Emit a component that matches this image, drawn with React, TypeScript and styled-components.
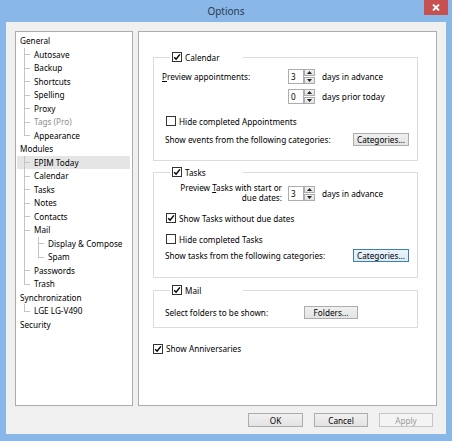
import React from "react";
import styled, { createGlobalStyle } from "styled-components";

const GlobalStyle = createGlobalStyle`
  html, body { margin: 0; padding: 0; }
  body {
    width: 452px;
    height: 441px;
    overflow: hidden;
    font-family: "Noto Sans", "Liberation Sans", sans-serif;
    font-size: 8.2px;
    color: #000;
  }
`;

type TreeItem = { label: string; level: number; last?: boolean; through?: number[]; disabled?: boolean; selected?: boolean };

// through = ancestor levels whose guide line keeps running past this row
const treeItems: TreeItem[] = [
  { label: "General", level: 0 },
  { label: "Autosave", level: 1 },
  { label: "Backup", level: 1 },
  { label: "Shortcuts", level: 1 },
  { label: "Spelling", level: 1 },
  { label: "Proxy", level: 1 },
  { label: "Tags (Pro)", level: 1, disabled: true },
  { label: "Appearance", level: 1, last: true },
  { label: "Modules", level: 0 },
  { label: "EPIM Today", level: 1, selected: true },
  { label: "Calendar", level: 1 },
  { label: "Tasks", level: 1 },
  { label: "Notes", level: 1 },
  { label: "Contacts", level: 1 },
  { label: "Mail", level: 1 },
  { label: "Display & Compose", level: 2, through: [1] },
  { label: "Spam", level: 2, last: true, through: [1] },
  { label: "Passwords", level: 1 },
  { label: "Trash", level: 1, last: true },
  { label: "Synchronization", level: 0 },
  { label: "LGE LG-V490", level: 1, last: true },
  { label: "Security", level: 0 },
];

const Frame = styled.div`
  width: 452px;
  height: 441px;
  box-sizing: border-box;
  background: #88b7e8;
  padding: 0 6px 7px 6px;
  display: flex;
  flex-direction: column;
`;

const TitleBar = styled.div`
  position: relative;
  height: 22px;
  display: flex;
  align-items: center;
  justify-content: center;
  font-size: 10px;
  color: #2c3a4e;
`;

const CloseButton = styled.div`
  position: absolute;
  top: 0;
  right: -2px;
  width: 24px;
  height: 15px;
  background: #c75050;
  display: flex;
  align-items: center;
  justify-content: center;
`;

const Client = styled.div`
  flex: 1;
  background: #f0f0f0;
  display: flex;
  flex-direction: column;
  padding: 9px 9px 0 9px;
`;

const Body = styled.div`
  display: flex;
  gap: 5px;
  height: 375px;
`;

const Tree = styled.div`
  width: 118px;
  box-sizing: border-box;
  background: #fff;
  border: 1px solid #adadad;
  padding: 2px 2px 0 1px;
`;

const Row = styled.div<{ $level: number; $selected?: boolean; $disabled?: boolean }>`
  position: relative;
  height: 13.5px;
  line-height: 13.5px;
  padding-left: ${(p) => 3 + p.$level * 14}px;
  background: ${(p) => (p.$selected ? "#e5e5e5" : "transparent")};
  color: ${(p) => (p.$disabled ? "#8d8d8d" : "#000")};
  white-space: nowrap;
`;

const Guide = styled.span<{ $x: number; $half?: boolean }>`
  position: absolute;
  left: ${(p) => p.$x}px;
  top: 0;
  height: ${(p) => (p.$half ? "50%" : "100%")};
  border-left: 1px solid #c4c4c4;
`;

const Stub = styled.span<{ $x: number }>`
  position: absolute;
  left: ${(p) => p.$x}px;
  top: 50%;
  width: 6px;
  border-top: 1px solid #c4c4c4;
`;

const Panel = styled.div`
  flex: 1;
  box-sizing: border-box;
  background: #fff;
  border: 1px solid #adadad;
  padding: 18.5px 18px 0 14px;
`;

const Group = styled.fieldset<{ $pt: number; $pb: number; $mt?: number }>`
  margin: ${(p) => p.$mt ?? 0}px 0 0 0;
  border: 1px solid #dcdcdc;
  padding: ${(p) => p.$pt}px 8px ${(p) => p.$pb}px 8px;
  min-width: 0;
`;

const Legend = styled.legend`
  margin-left: 8px;
  width: 73px;
  box-sizing: border-box;
  padding: 0 2px;
  height: 13px;
  display: flex;
  align-items: center;
  gap: 3px;
`;

const SpinGrid = styled.div<{ $rowH: number }>`
  display: grid;
  grid-template-columns: 120px 27px auto;
  grid-auto-rows: ${(p) => p.$rowH}px;
  column-gap: 6px;
  row-gap: 5px;
  align-items: center;
`;

const SpinLabel = styled.div<{ $right?: boolean }>`
  text-align: ${(p) => (p.$right ? "right" : "left")};
  line-height: 10px;
`;

const SpinAfter = styled.div`
  margin-left: 1px;
`;

const SpinBox = styled.div`
  display: flex;
  height: 15px;
`;

const SpinInput = styled.div`
  width: 16px;
  box-sizing: border-box;
  border: 1px solid #abadb3;
  background: #fff;
  padding-left: 2px;
  line-height: 13px;
`;

const SpinButtons = styled.div`
  width: 11px;
  display: flex;
  flex-direction: column;
  gap: 1px;
`;

const SpinButton = styled.div`
  flex: 1;
  box-sizing: border-box;
  border: 1px solid #acacac;
  background: linear-gradient(#f2f2f2, #e2e2e2);
  display: flex;
  align-items: center;
  justify-content: center;
`;

const CheckRow = styled.div<{ $mt: number; $indent: number }>`
  margin-top: ${(p) => p.$mt}px;
  padding-left: ${(p) => p.$indent}px;
  height: 13px;
  display: flex;
  align-items: center;
  gap: 3px;
`;

const Box = styled.span`
  width: 10px;
  height: 10px;
  box-sizing: border-box;
  border: 1px solid #333;
  background: #fff;
  display: inline-flex;
  align-items: center;
  justify-content: center;
  flex-shrink: 0;
`;

const ButtonRow = styled.div<{ $mt: number; $textW?: number }>`
  margin-top: ${(p) => p.$mt}px;
  padding-left: 3px;
  height: 13px;
  display: flex;
  align-items: center;
  & > span {
    ${(p) => (p.$textW ? `width: ${p.$textW}px;` : "flex: 1;")}
  }
`;

const Button = styled.div<{ $w: number; $h?: number; $focus?: boolean; $disabled?: boolean }>`
  width: ${(p) => p.$w}px;
  height: ${(p) => p.$h ?? 13}px;
  box-sizing: border-box;
  border: 1px solid ${(p) => (p.$focus ? "#3c7fb1" : p.$disabled ? "#c6c6c6" : "#acacac")};
  background: ${(p) =>
    p.$focus
      ? "linear-gradient(#eaf3fb, #dcebf8)"
      : p.$disabled
      ? "#f4f4f4"
      : "linear-gradient(#f0f0f0, #e3e3e3)"};
  color: ${(p) => (p.$disabled ? "#9a9a9a" : "#000")};
  display: flex;
  align-items: center;
  justify-content: center;
  flex-shrink: 0;
`;

const Footer = styled.div`
  display: flex;
  justify-content: flex-end;
  gap: 11px;
  padding: 7px 4px 7px 0;
`;

const Check = ({ on }: { on: boolean }) => (
  <Box>
    {on && (
      <svg width="8" height="8" viewBox="0 0 8 8">
        <path d="M1.2 4.2 L3.1 6.2 L6.9 1.4" fill="none" stroke="#000" strokeWidth="1.5" />
      </svg>
    )}
  </Box>
);

const Spin = ({ value }: { value: string }) => (
  <SpinBox>
    <SpinInput>{value}</SpinInput>
    <SpinButtons>
      <SpinButton>
        <svg width="5" height="3" viewBox="0 0 5 3"><path d="M0 3 L2.5 0 L5 3 Z" fill="#222" /></svg>
      </SpinButton>
      <SpinButton>
        <svg width="5" height="3" viewBox="0 0 5 3"><path d="M0 0 L2.5 3 L5 0 Z" fill="#222" /></svg>
      </SpinButton>
    </SpinButtons>
  </SpinBox>
);

export default function App() {
  return (
    <>
      <GlobalStyle />
      <Frame>
        <TitleBar>
          Options
          <CloseButton>
            <svg width="8" height="7" viewBox="0 0 8 7">
              <path d="M1 0.5 L7 6.5 M7 0.5 L1 6.5" stroke="#fff" strokeWidth="1.8" />
            </svg>
          </CloseButton>
        </TitleBar>
        <Client>
          <Body>
            <Tree>
              {treeItems.map((it, i) => (
                <Row key={i} $level={it.level} $selected={it.selected} $disabled={it.disabled}>
                  {(it.through || []).map((l) => (
                    <Guide key={"t" + l} $x={7 + (l - 1) * 14} />
                  ))}
                  {it.level > 0 && (
                    <>
                      <Guide $x={7 + (it.level - 1) * 14} $half={it.last} />
                      <Stub $x={7 + (it.level - 1) * 14} />
                    </>
                  )}
                  {it.label}
                </Row>
              ))}
            </Tree>
            <Panel>
              <Group $pt={5.5} $pb={14}>
                <Legend>
                  <Check on />
                  Calendar
                </Legend>
                <SpinGrid $rowH={15}>
                  <SpinLabel>
                    <u>P</u>review appointments:
                  </SpinLabel>
                  <Spin value="3" />
                  <SpinAfter>days in advance</SpinAfter>
                  <div />
                  <Spin value="0" />
                  <SpinAfter>days prior today</SpinAfter>
                </SpinGrid>
                <CheckRow $mt={10.5} $indent={4}>
                  <Check on={false} />
                  Hide completed Appointments
                </CheckRow>
                <ButtonRow $mt={5.5}>
                  <span>Show events from the following categories:</span>
                  <Button $w={56}>Categories...</Button>
                </ButtonRow>
              </Group>

              <Group $pt={4.5} $pb={15} $mt={4.5}>
                <Legend>
                  <Check on />
                  Tasks
                </Legend>
                <SpinGrid $rowH={20}>
                  <SpinLabel $right>
                    Preview <u>T</u>asks with start or
                    <br />
                    due dates:
                  </SpinLabel>
                  <Spin value="3" />
                  <SpinAfter>days in advance</SpinAfter>
                </SpinGrid>
                <CheckRow $mt={8.5} $indent={4}>
                  <Check on />
                  Show Tasks without due dates
                </CheckRow>
                <CheckRow $mt={8} $indent={4}>
                  <Check on={false} />
                  Hide completed Tasks
                </CheckRow>
                <ButtonRow $mt={3.5}>
                  <span>Show tasks from the following categories:</span>
                  <Button $w={56} $focus>
                    Categories...
                  </Button>
                </ButtonRow>
              </Group>

              <Group $pt={9} $pb={8.5} $mt={5.5}>
                <Legend>
                  <Check on />
                  Mail
                </Legend>
                <ButtonRow $mt={0} $textW={139}>
                  <span>Select folders to be shown:</span>
                  <Button $w={54}>Folders...</Button>
                </ButtonRow>
              </Group>

              <CheckRow $mt={14} $indent={0}>
                <Check on />
                Show Anniversaries
              </CheckRow>
            </Panel>
          </Body>
          <Footer>
            <Button $w={55} $h={14}>OK</Button>
            <Button $w={54} $h={14}>Cancel</Button>
            <Button $w={54} $h={14} $disabled>Apply</Button>
          </Footer>
        </Client>
      </Frame>
    </>
  );
}
